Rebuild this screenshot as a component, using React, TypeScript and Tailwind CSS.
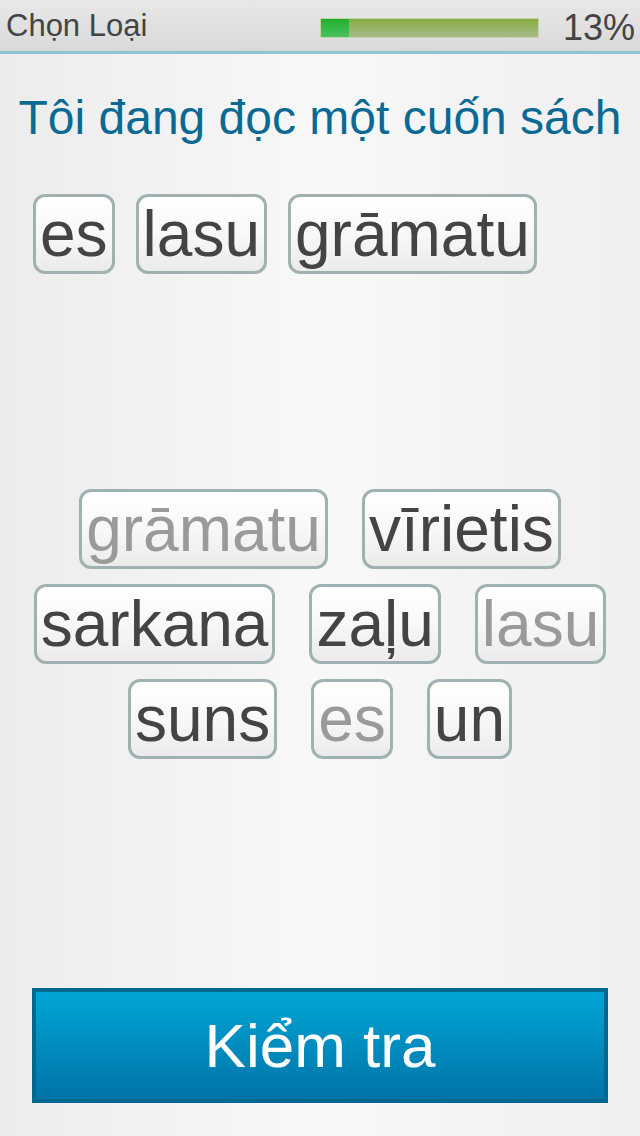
const answer = ["es", "lasu", "grāmatu"];

const bank: { word: string; used: boolean }[] = [
  { word: "grāmatu", used: true },
  { word: "vīrietis", used: false },
  { word: "sarkana", used: false },
  { word: "zaļu", used: false },
  { word: "lasu", used: true },
  { word: "suns", used: false },
  { word: "es", used: true },
  { word: "un", used: false },
];

function Chip({ word, used }: { word: string; used?: boolean }) {
  return (
    <div
      className={`h-[80px] rounded-[12px] border-[3px] border-[#9fb1b1] bg-linear-to-b from-white via-[#f8f8f8] to-[#ebebeb] px-[4px] text-[64px] leading-[74px] whitespace-nowrap ${
        used ? "text-[#9a9a9a]" : "text-[#444]"
      }`}
    >
      {word}
    </div>
  );
}

export default function App() {
  const progress = 13;

  return (
    <div className="flex min-h-[1136px] w-[640px] flex-col bg-linear-to-r from-[#ececec] via-[#f8f8f8] to-[#efefef] font-['Liberation_Sans',Arial,sans-serif]">
      <header className="flex h-[54px] items-start border-b-[3px] border-[#8ec3d4] bg-linear-to-b from-[#e8e8e8] to-[#d9d9d9] pl-[6px] pr-[5px]">
        <span className="mt-[8px] text-[31px] leading-[36px] text-[#444]">Chọn Loại</span>
        <div className="ml-auto mt-[18px] h-[20px] w-[219px] overflow-hidden border border-[#c4d3a8] bg-linear-to-b from-[#89ab3f] to-[#a8bb88]">
          <div
            className="h-full bg-linear-to-b from-[#22ae2e] to-[#48c25c]"
            style={{ width: `${progress}%` }}
          />
        </div>
        <span className="ml-[24px] mt-[8px] text-[36px] leading-[40px] text-[#444]">{progress}%</span>
      </header>

      <h1 className="mt-[36px] text-center text-[48px] leading-[56px] text-[#0a6a94]">
        Tôi đang đọc một cuốn sách
      </h1>

      <div className="mt-[48px] flex gap-[21px] pl-[33px]">
        {answer.map((w, i) => (
          <Chip key={i} word={w} />
        ))}
      </div>

      <div className="mt-[215px] flex flex-wrap justify-center gap-x-[34px] gap-y-[15px] px-[20px]">
        {bank.map((b, i) => (
          <Chip key={i} word={b.word} used={b.used} />
        ))}
      </div>

      <button className="mx-[32px] mb-[33px] mt-auto h-[115px] border-[4px] border-[#00678e] bg-linear-to-b from-[#00a6d6] to-[#0073a7] text-[62px] leading-[70px] text-white">
        Kiểm tra
      </button>
    </div>
  );
}
